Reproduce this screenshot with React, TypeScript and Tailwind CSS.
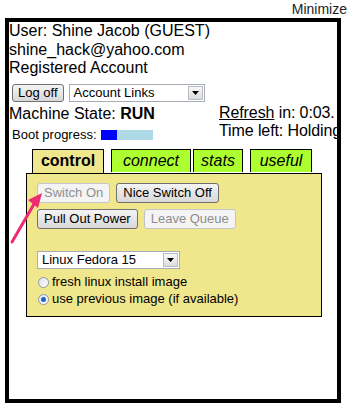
import React from "react";

const font = { fontFamily: '"Liberation Sans", Arial, sans-serif' };

function Btn({ label, disabled, small }: { label: string; disabled?: boolean; small?: boolean }) {
  const h = small ? "h-[18px] px-[5px]" : "h-[20px] px-[6px]";
  return (
    <div
      className={
        disabled
          ? `flex items-center rounded-[3px] border border-[#c2c6ca] bg-[#f4f4f4] text-[13px] text-[#8e8e8e] ${h}`
          : `flex items-center rounded-[3px] border border-[#707070] bg-gradient-to-b from-[#f4f4f4] to-[#d8d8d8] text-[13px] text-black ${h}`
      }
    >
      {label}
    </div>
  );
}

function Select({ label, width }: { label: string; width: string }) {
  return (
    <div className={`flex h-[18px] items-center border border-[#a5acb5] bg-white ${width}`}>
      <span className="flex-1 pl-[4px] text-[13px] leading-none">{label}</span>
      <div className="mr-[1px] flex h-[14px] w-[15px] items-center justify-center border border-[#b8bcc2] bg-gradient-to-b from-[#f8f8f8] to-[#dcdcdc]">
        <svg width="7" height="4" viewBox="0 0 7 4">
          <path d="M0 0h7L3.5 4z" fill="#000" />
        </svg>
      </div>
    </div>
  );
}

function Radio({ checked, label }: { checked?: boolean; label: string }) {
  return (
    <div className="flex h-[17px] items-center pl-[1px] text-[13px]">
      <span className="mr-[3px] flex h-[11px] w-[11px] items-center justify-center rounded-full border border-[#8c9aa6] bg-gradient-to-br from-[#dde2e7] to-white">
        {checked && <span className="h-[5px] w-[5px] rounded-full bg-[#1f66c2]" />}
      </span>
      {label}
    </div>
  );
}

export default function App() {
  return (
    <div className="relative h-[412px] w-[355px] bg-white text-black" style={font}>
      <div className="h-[18px] pr-[8px] text-right text-[14px] leading-[18px] text-[#222]">Minimize</div>

      <div className="ml-[5px] h-[385px] w-[336px] overflow-hidden border-4 border-black">
        <div className="text-[16px] leading-[18.5px]">
          <div>User: Shine Jacob (GUEST)</div>
          <div>shine_hack@yahoo.com</div>
          <div>Registered Account</div>
        </div>

        <div className="mt-[6px] flex items-center gap-[5px] pl-[3px]">
          <Btn label="Log off" small />
          <Select label="Account Links" width="w-[136px]" />
        </div>

        <div className="mt-[2px] flex">
          <div className="w-[210px] shrink-0">
            <div className="text-[16px] leading-[19px]">
              Machine State: <b>RUN</b>
            </div>
            <div className="mt-[5px] flex items-center pl-[3px] text-[13px] leading-[14px]">
              Boot progress:
              <div className="ml-[4px] flex h-[10px] w-[52px] bg-[#add8e6]">
                <div className="w-[16px] bg-[#0000ff]" />
              </div>
            </div>
          </div>
          <div className="whitespace-nowrap text-[16px] leading-[18px] tracking-[-0.1px]">
            <div>
              <span className="underline">Refresh</span> in: 0:03.
            </div>
            <div>Time left: Holding</div>
          </div>
        </div>

        <div className="mt-[7px] flex pl-[23px] text-[16px]">
          <div className="flex h-[24px] w-[72px] items-center justify-center border border-b-0 border-black bg-[#f0e68c] font-bold">
            control
          </div>
          <div className="ml-[7px] flex h-[23px] w-[80px] items-center justify-center border border-b-0 border-black bg-[#adff2f] italic">
            connect
          </div>
          <div className="ml-[2px] flex h-[23px] w-[50px] items-center justify-center border border-b-0 border-black bg-[#adff2f] italic">
            stats
          </div>
          <div className="ml-[7px] flex h-[23px] w-[62px] items-center justify-center border border-b-0 border-black bg-[#adff2f] italic">
            useful
          </div>
        </div>

        <div className="ml-[17px] h-[144px] w-[296px] border border-black bg-[#f0e68c] pl-[10px] pt-[9px]">
          <div className="flex gap-[6px]">
            <Btn label="Switch On" disabled />
            <Btn label="Nice Switch Off" />
          </div>
          <div className="mt-[6px] flex gap-[6px]">
            <Btn label="Pull Out Power" />
            <Btn label="Leave Queue" disabled />
          </div>
          <div className="mt-[22px]">
            <Select label="Linux Fedora 15" width="w-[143px]" />
          </div>
          <div className="mt-[5px]">
            <Radio label="fresh linux install image" />
            <Radio checked label="use previous image (if available)" />
          </div>
        </div>
      </div>

      <svg className="absolute left-0 top-0" width="355" height="412" viewBox="0 0 355 412">
        <line x1="12" y1="242" x2="34" y2="204" stroke="#ee2a72" strokeWidth="3" strokeLinecap="round" />
        <path d="M42 193 L28 200 L38 208 Z" fill="#ee2a72" />
      </svg>
    </div>
  );
}
